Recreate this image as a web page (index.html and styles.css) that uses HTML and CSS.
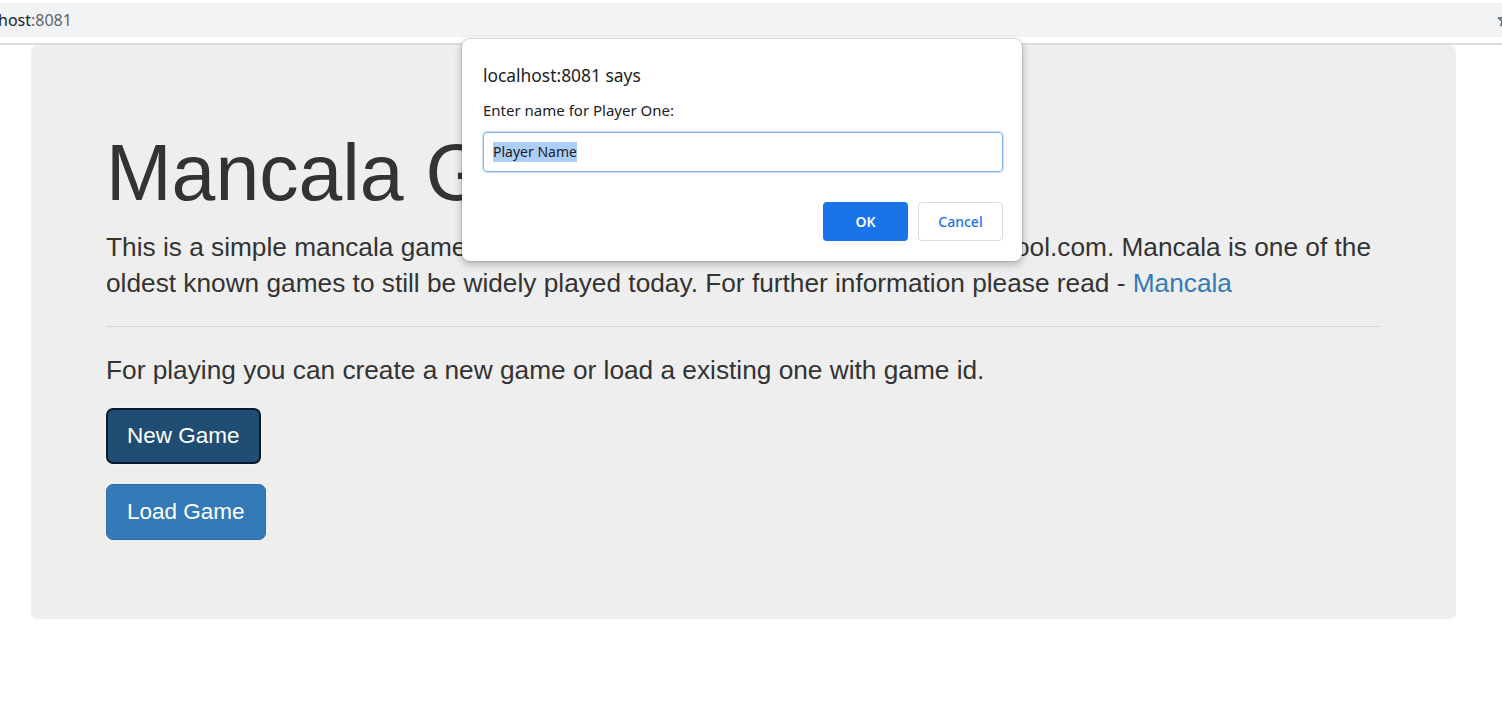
FILE: index.html
```html
<!DOCTYPE html>
<html lang="en">
<head>
<meta charset="utf-8">
<title>Mancala Game</title>
<link rel="stylesheet" href="styles.css">
</head>
<body>
<div class="chrome">
  <div class="omnibox">
    <span class="url"><span class="host">host</span><span class="port">:8081</span></span>
    <svg class="star" width="16" height="16" viewBox="0 0 16 16"><path d="M8 1.5l1.9 4.2 4.6.4-3.5 3 1.1 4.5L8 11.2l-4.1 2.4 1.1-4.5-3.5-3 4.6-.4z" fill="none" stroke="#5f6368" stroke-width="1.5" stroke-linejoin="round"/></svg>
  </div>
  <div class="chrome-gap"></div>
  <div class="chrome-line"></div>
</div>

<div class="page">
  <div class="jumbotron">
    <h1 class="title">Mancala Game</h1>
    <p class="lead">This is a simple mancala game implemented as the coding assignment for school.com. Mancala is one of the oldest known games to still be widely played today. For further information please read - <a class="link" href="#">Mancala</a></p>
    <hr class="divider">
    <p class="lead">For playing you can create a new game or load a existing one with game id.</p>
    <p class="btn-row"><a class="btn btn-active" href="#">New Game</a></p>
    <p class="btn-row"><a class="btn" href="#">Load Game</a></p>
  </div>
</div>

<div class="dialog">
  <div class="dialog-title">localhost:8081 says</div>
  <div class="dialog-msg">Enter name for Player One:</div>
  <div class="dialog-input"><span class="selected">Player Name</span></div>
  <div class="dialog-actions">
    <span class="dbtn dbtn-ok">OK</span>
    <span class="dbtn dbtn-cancel">Cancel</span>
  </div>
</div>
</body>
</html>
```
FILE: styles.css
```css
html, body {
  margin: 0;
  padding: 0;
  background: #fff;
  overflow: hidden;
}
body {
  font-family: "Liberation Sans", Arial, Helvetica, sans-serif;
  color: #333;
  width: 1502px;
  height: 717px;
  position: relative;
}

/* browser chrome remnant */
.chrome {
  padding-top: 3px;
}
.omnibox {
  height: 34px;
  background: #f1f3f4;
  display: flex;
  align-items: center;
  justify-content: space-between;
  overflow: hidden;
  font-family: "Noto Sans", "Open Sans", sans-serif;
  font-size: 16px;
}
.url {
  margin-left: -2px;
}
.host { color: #202124; }
.port { color: #5f6368; }
.star {
  margin-right: -11px;
  flex: none;
}
.chrome-gap { height: 6px; }
.chrome-line { height: 2px; background: #dadce0; }

/* page */
.page {
  padding-left: 31px;
}
.jumbotron {
  width: 1425px;
  box-sizing: border-box;
  background: #eee;
  border-radius: 7px;
  padding: 60px 75px 59px;
}
.title {
  margin: 25px 0 12.5px;
  font-size: 78.75px;
  line-height: 1.1;
  font-weight: 400;
  color: #333;
}
.lead {
  font-size: 26.25px;
  line-height: 36px;
  margin: 0 0 18.75px;
}
.link {
  color: #337ab7;
  text-decoration: none;
}
.divider {
  margin: 25px 0;
  border: 0;
  border-top: 1px solid #d5d5d5;
  height: 0;
}
.lead + .btn-row { margin-top: 20px; }
.btn-row {
  margin: 0 0 20px;
  line-height: 0;
}
.btn {
  display: inline-block;
  box-sizing: border-box;
  height: 56px;
  padding: 12px 20px;
  line-height: 30px;
  font-size: 22.5px;
  color: #fff;
  background: #337ab7;
  border: 1px solid #2e6da4;
  border-radius: 7px;
  text-decoration: none;
}
.btn-active {
  background: #1f4d73;
  border: 2px solid #0b1a28;
  padding: 11px 19px;
  box-shadow: 0 0 0 1px #f4f4f4;
}

/* prompt dialog (overlay) */
.dialog {
  position: absolute;
  left: 462px;
  top: 39px;
  width: 560px;
  height: 222px;
  box-sizing: border-box;
  background: #fff;
  border-radius: 8px;
  box-shadow: 0 0 0 1px rgba(0,0,0,0.10), 0 3px 8px rgba(0,0,0,0.28);
  padding: 24px 19px 20px 21px;
  font-family: "Noto Sans", "Open Sans", sans-serif;
  color: #202124;
  display: flex;
  flex-direction: column;
}
.dialog-title {
  font-size: 17.4px;
  line-height: 24px;
}
.dialog-msg {
  font-size: 15px;
  line-height: 20px;
  margin-top: 13px;
}
.dialog-input {
  margin-top: 12px;
  height: 40px;
  box-sizing: border-box;
  border: 1px solid #8ab4f8;
  box-shadow: 0 0 0 1px #c6dafc;
  border-radius: 4px;
  display: flex;
  align-items: center;
  padding-left: 9px;
  font-size: 14px;
  color: #202124;
}
.selected {
  background: #accef7;
  line-height: 20px;
}
.dialog-actions {
  margin-top: auto;
  display: flex;
  justify-content: flex-end;
  gap: 10px;
}
.dbtn {
  width: 85px;
  height: 39px;
  box-sizing: border-box;
  border-radius: 4px;
  display: flex;
  align-items: center;
  justify-content: center;
  font-size: 14px;
  font-weight: 600;
}
.dbtn-ok {
  background: #1a73e8;
  color: #fff;
}
.dbtn-cancel {
  border: 1px solid #dadce0;
  color: #1a73e8;
  font-weight: 500;
}
```
